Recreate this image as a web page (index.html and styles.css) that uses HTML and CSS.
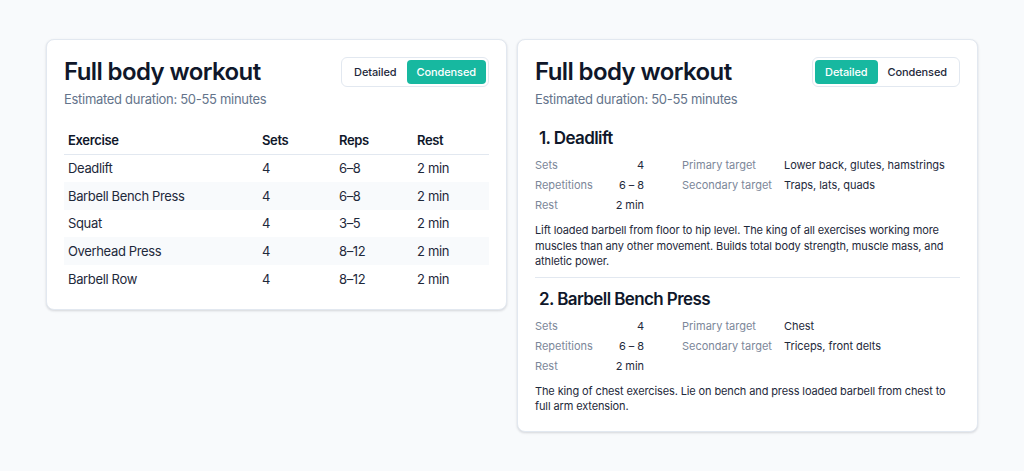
FILE: index.html
```html
<!DOCTYPE html>
<html lang="en">
<head>
<meta charset="utf-8">
<title>Full body workout</title>
<link rel="stylesheet" href="styles.css">
</head>
<body>
<main class="page">
  <section class="card">
    <header class="card-head">
      <div class="head-text">
        <h1 class="title">Full body workout</h1>
        <p class="subtitle">Estimated duration: 50-55 minutes</p>
      </div>
      <div class="toggle">
        <button class="toggle-btn">Detailed</button>
        <button class="toggle-btn active">Condensed</button>
      </div>
    </header>
    <table class="table">
      <thead>
        <tr><th class="c-ex">Exercise</th><th class="c-sets">Sets</th><th class="c-reps">Reps</th><th class="c-rest">Rest</th></tr>
      </thead>
      <tbody>
        <tr><td>Deadlift</td><td>4</td><td>6–8</td><td>2 min</td></tr>
        <tr><td>Barbell Bench Press</td><td>4</td><td>6–8</td><td>2 min</td></tr>
        <tr><td>Squat</td><td>4</td><td>3–5</td><td>2 min</td></tr>
        <tr><td>Overhead Press</td><td>4</td><td>8–12</td><td>2 min</td></tr>
        <tr><td>Barbell Row</td><td>4</td><td>8–12</td><td>2 min</td></tr>
      </tbody>
    </table>
  </section>

  <section class="card">
    <header class="card-head">
      <div class="head-text">
        <h1 class="title">Full body workout</h1>
        <p class="subtitle">Estimated duration: 50-55 minutes</p>
      </div>
      <div class="toggle">
        <button class="toggle-btn active">Detailed</button>
        <button class="toggle-btn">Condensed</button>
      </div>
    </header>

    <article class="exercise">
      <h2 class="ex-title">1. Deadlift</h2>
      <div class="stats">
        <dl class="stat-grid">
          <dt>Sets</dt><dd>4</dd>
          <dt>Repetitions</dt><dd>6 – 8</dd>
          <dt>Rest</dt><dd>2 min</dd>
        </dl>
        <dl class="target-grid">
          <dt>Primary target</dt><dd>Lower back, glutes, hamstrings</dd>
          <dt>Secondary target</dt><dd>Traps, lats, quads</dd>
        </dl>
      </div>
      <p class="desc">Lift loaded barbell from floor to hip level. The king of all exercises working more muscles than any other movement. Builds total body strength, muscle mass, and athletic power.</p>
    </article>

    <article class="exercise">
      <h2 class="ex-title">2. Barbell Bench Press</h2>
      <div class="stats">
        <dl class="stat-grid">
          <dt>Sets</dt><dd>4</dd>
          <dt>Repetitions</dt><dd>6 – 8</dd>
          <dt>Rest</dt><dd>2 min</dd>
        </dl>
        <dl class="target-grid">
          <dt>Primary target</dt><dd>Chest</dd>
          <dt>Secondary target</dt><dd>Triceps, front delts</dd>
        </dl>
      </div>
      <p class="desc">The king of chest exercises. Lie on bench and press loaded barbell from chest to full arm extension.</p>
    </article>
  </section>
</main>
</body>
</html>
```

FILE: styles.css
```css
* { box-sizing: border-box; }

html, body {
  margin: 0;
  padding: 0;
  background: #f8fafc;
}

body {
  font-family: Inter, "Noto Sans", sans-serif;
  color: #1e293b;
}

.page {
  display: flex;
  align-items: flex-start;
  gap: 10px;
  padding: 39px 46px;
}

.card {
  width: 462px;
  background: #ffffff;
  border: 1px solid #e2e8f0;
  border-radius: 8px;
  box-shadow: 0 1px 3px rgba(15, 23, 42, 0.10), 0 1px 2px rgba(15, 23, 42, 0.06);
  padding: 16px 17px 16px;
}

.card-head {
  display: flex;
  justify-content: space-between;
  align-items: flex-start;
}

.title {
  margin: 0;
  font-size: 24px;
  line-height: 32px;
  font-weight: 600;
  color: #0f172a;
  letter-spacing: -0.025em;
}

.subtitle {
  margin: 2px 0 0;
  font-size: 13px;
  line-height: 18px;
  color: #64748b;
  letter-spacing: -0.3px;
}

.toggle {
  display: flex;
  margin-top: 1px;
  padding: 2px;
  border: 1px solid #e2e8f0;
  border-radius: 6px;
  background: #fff;
}

.toggle-btn {
  font-family: inherit;
  font-size: 11px;
  font-weight: 500;
  line-height: 24px;
  height: 24px;
  padding: 0 10px;
  border: 0;
  border-radius: 4px;
  background: transparent;
  color: #1e293b;
  letter-spacing: -0.1px;
}

.toggle-btn.active {
  background: #17b8a0;
  color: #ffffff;
}

/* Condensed table */
.table {
  width: 100%;
  margin-top: 19px;
  border-collapse: collapse;
  font-size: 13px;
  letter-spacing: -0.35px;
}

.table th,
.table td {
  text-align: left;
  padding: 0 4px;
  height: 27.75px;
}

.table th {
  font-weight: 600;
  color: #0f172a;
  height: 27px;
  border-bottom: 1px solid #e2e8f0;
}

.table td { color: #1e293b; }

.table tbody tr:nth-child(even) td { background: #f8fafc; }

.c-ex { width: 194px; }
.c-sets { width: 77px; }
.c-reps { width: 78px; }

/* Detailed view */
.exercise + .exercise {
  border-top: 1px solid #e2e8f0;
  margin-top: 7px;
}

.ex-title {
  margin: 0;
  padding: 18px 4px 0;
  font-size: 17px;
  line-height: 24px;
  font-weight: 600;
  color: #0f172a;
  letter-spacing: -0.6px;
}

.exercise + .exercise .ex-title { padding-top: 9px; }

.stats {
  display: flex;
  gap: 38px;
  margin-top: 5px;
  font-size: 11px;
  line-height: 20px;
}

.stat-grid,
.target-grid {
  margin: 0;
  display: grid;
}

.stat-grid {
  grid-template-columns: 74px 35px;
}

.target-grid {
  grid-template-columns: 102px auto;
  align-content: start;
}

.stats dt { color: #7c8799; }
.stats dd { margin: 0; color: #1e293b; letter-spacing: -0.05px; }
.stat-grid dd { text-align: right; }

.desc {
  margin: 8px 0 0;
  font-size: 11px;
  line-height: 15.5px;
  color: #1e293b;
  letter-spacing: -0.12px;
}
```
